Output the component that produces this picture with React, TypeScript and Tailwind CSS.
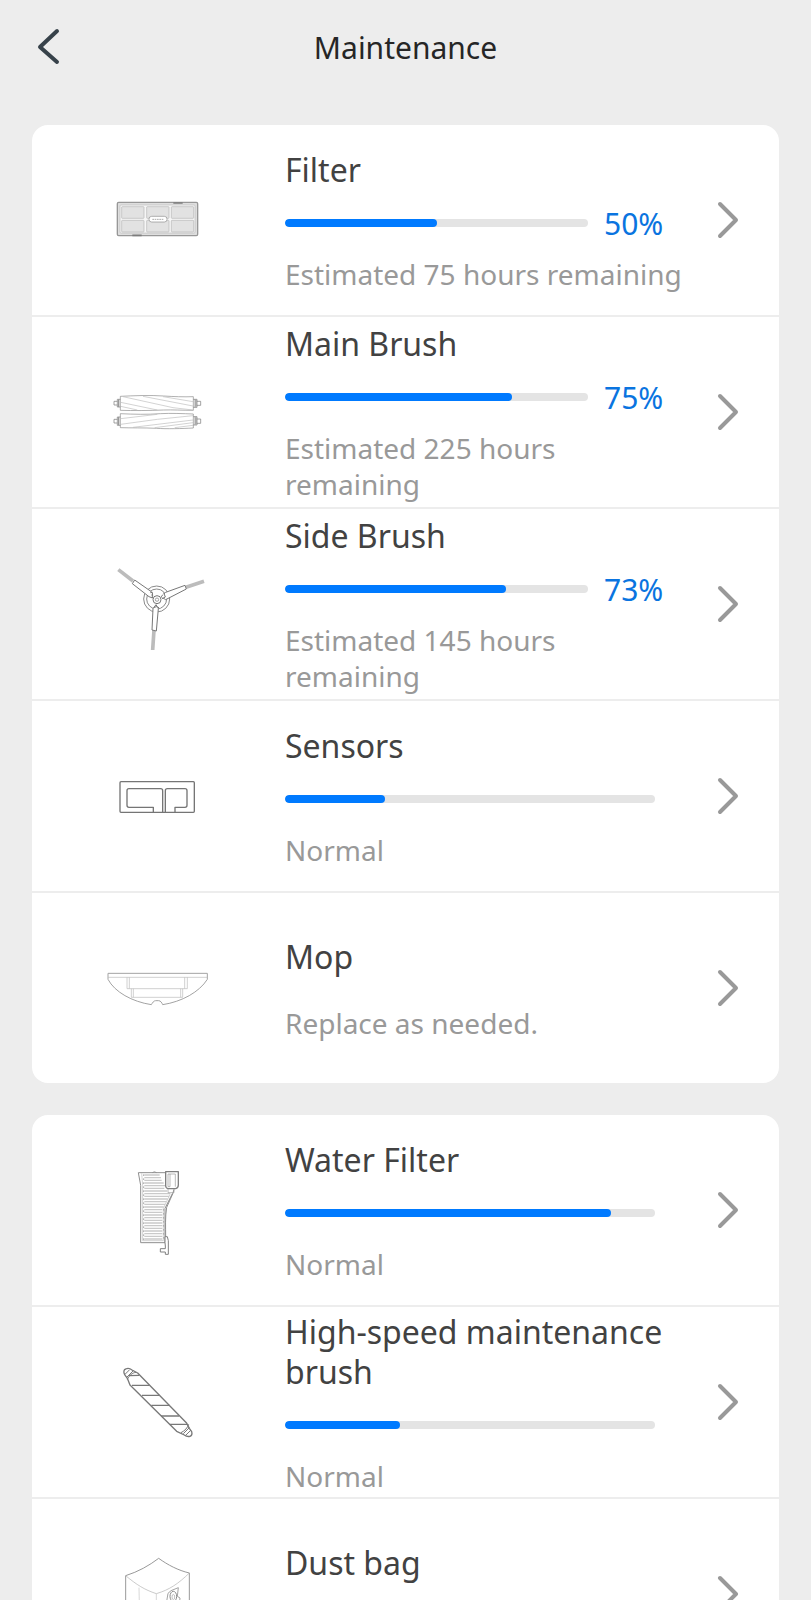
import type { ReactNode } from "react";

interface Part {
  name: string;
  status?: string;
  level?: number;
  showPercent?: boolean;
  icon: ReactNode;
}

function Drawing({ viewBox, children }: { viewBox: string; children: ReactNode }) {
  return (
    <svg
      className="h-[120px] w-[120px]"
      viewBox={viewBox}
      fill="none"
      stroke="#8a8a8a"
      strokeWidth={3}
      strokeLinejoin="round"
      aria-hidden="true"
    >
      {children}
    </svg>
  );
}

function FilterIcon() {
  return (
    <Drawing viewBox="-5 -60 360 360">
      <rect x="53" y="67" width="241" height="100" rx="4" fill="#dedede" stroke="#979797" strokeWidth={4} />
      <rect x="61" y="75" width="225" height="84" rx="3" fill="#f6f6f6" stroke="#bdbdbd" strokeWidth={2} />
      {[66, 141, 215].map((x) => (
        <g key={x} fill="#e2e2e2" stroke="#b6b6b6" strokeWidth={2}>
          <rect x={x} y="80" width="67" height="35" rx="2" />
          <rect x={x} y="121" width="67" height="35" rx="2" />
        </g>
      ))}
      <rect x="148" y="109" width="54" height="17" rx="8" fill="#fff" stroke="#8c8c8c" strokeWidth={2} />
      <path d="M158 118h34" stroke="#aaa" strokeWidth={3} strokeDasharray="5 2" />
      <path d="M221 69h28M98 166h28" stroke="#7d7d7d" strokeWidth={5} />
    </Drawing>
  );
}

function MainBrushIcon() {
  return (
    <Drawing viewBox="-5 -84 360 360">
      <g strokeWidth={2}>
        <path d="M62 49c40-2 90-4 130-1 30 2 60 3 89 2v41c-35 0-60-2-90-1-45 2-90 2-129 1z" />
        <path d="M62 101c40 2 80 3 120 0 30-2 70 0 99 1v42c-35 2-80 3-110 1-40-2-75-1-109-2z" />
        <path
          d="M63 67l110 23M70 50l150 33 60 7M130 49l150 29M190 50l90 15M63 79l50 11M63 116l110-13M63 133l110-15 107-11M100 142l180-22M165 143l115-15M225 143l55-7"
          stroke="#bcbcbc"
        />
        <path
          d="M62 58h-9v23h9M53 64H43v11h10M281 58h11v24h-11M292 64h11v12h-11M286 58v24M62 111h-9v25h9M53 118H43v11h10M281 110h11v25h-11M292 117h11v13h-11M286 110v25"
          stroke="#777"
        />
        <path d="M57 58v23M57 111v25M289 60v20M289 112v21" stroke="#999" strokeWidth={4} />
      </g>
    </Drawing>
  );
}

function SideBrushIcon() {
  return (
    <Drawing viewBox="-5 -33 360 360">
      <g strokeWidth={3} stroke="#8a8a8a">
        <circle cx="171" cy="132" r="39" />
        <circle cx="171" cy="132" r="30" />
      </g>
      <g stroke="#bcbcbc" strokeWidth={11}>
        <path d="M56 44l44 34M313 79l-54 18M159 285l4-60" />
      </g>
      <g fill="#fff" stroke="#777" strokeWidth={3}>
        <path d="M105 75l50 35 4 19-11-4-50-39z" />
        <path d="M256 91l-58 21-14 13 14 9 62-32z" />
        <path d="M157 225l3-64 9-12 7 12-6 67z" />
        <path d="M152 113l6-1 1 11M192 113l5 13-10 5M162 158l8-3 8 3" />
        <circle cx="172" cy="134" r="12" />
        <circle cx="172" cy="134" r="5" strokeWidth={2} />
      </g>
    </Drawing>
  );
}

function SensorsIcon() {
  return (
    <Drawing viewBox="-5 -87 360 360">
      <g stroke="#757575" strokeWidth={4}>
        <rect x="61" y="50" width="223" height="92" rx="3" />
        <path d="M161 141v-14H88q-6 0-6-6V77q0-6 6-6h95q6 0 6 6v64" />
        <path d="M197 141V77q0-6 6-6h53q6 0 6 6v44q0 6-6 6h-30v14" />
      </g>
    </Drawing>
  );
}

function MopIcon() {
  return (
    <Drawing viewBox="10 -81 360 360">
      <path
        d="M40 55h298v18c-24 38-76 67-134 76-2-5-6-12-12-12h-9c-6 0-10 7-13 12-58-9-110-38-130-76z"
        strokeWidth={3}
        stroke="#a3a3a3"
      />
      <g stroke="#bababa" strokeWidth={2}>
        <path d="M40 67h298M97 67v34h181V67M104 67v34M270 67v34M110 101v26h154v-26M116 101v26M258 101v26" />
      </g>
    </Drawing>
  );
}

function WaterFilterIcon() {
  return (
    <Drawing viewBox="-65 -15 360 360">
      <path d="M138 53H56l7 38v172h73V160l22-44" stroke="#8f8f8f" />
      <path d="M66 55l3 36v166h62V160l20-42" stroke="#bbb" strokeWidth={2} />
      <path d="M98 53l6-3 7 3" strokeWidth={2} />
      <path
        d="M74 60h46M74 68h50M74 76h52M74 84h58M74 92h62M74 100h60M74 108h68M74 116h78M74 124h74M74 132h70M74 140h66M74 148h62M74 156h58M74 164h54M74 172h54M74 180h54M74 188h54M74 196h54M74 204h54M74 212h54M74 220h54M74 228h54M74 236h54M74 244h54M74 252h54"
        stroke="#cacaca"
        strokeWidth={4}
      />
      <path d="M72 58v198M132 162v92" stroke="#aaa" strokeWidth={3} strokeDasharray="5 7" />
      <path d="M138 50h38v40c0 6-4 10-8 11h-22c-5 0-8-5-8-9z" fill="#fff" stroke="#808080" strokeWidth={4} />
      <path d="M145 57h6v38h-6zM151 57h16v38M145 101v12h18v-10" stroke="#999" strokeWidth={2} />
      <path d="M163 103l-4 14-18 40c-5 30-3 60-3 87" stroke="#8f8f8f" />
      <path d="M136 245h7l3 12v41h-9v-7h-15v-10h15v-8l-1-10z" fill="#fff" stroke="#808080" />
    </Drawing>
  );
}

function MaintenanceBrushIcon() {
  return (
    <Drawing viewBox="-35 -39 360 360">
      <g stroke="#787878" strokeWidth={4}>
        <path d="M45 59c-4-7-3-15 3-17 6-3 14-1 19 3l17 9 146 149 9 17 7 10c2 7 0 12-5 14-5 1-12 0-17-4l-23-11L61 90l-8-20z" />
        <path
          d="M45 59l15-15M51 67l20-20M53 73c6-12 15-20 26-21M221 236l18-18M228 241l16-16M214 233c12-6 20-15 23-25"
          strokeWidth={3}
        />
        <path d="M58 62l31-1M67 91h53M97 121h53M125 151h55M154 183h54M180 208h53" />
      </g>
    </Drawing>
  );
}

function DustBagIcon() {
  return (
    <Drawing viewBox="-35 -18 360 360">
      <path d="M48 107c38-12 70-30 99-52 28 20 58 36 92 44v180l-99 40-92-40z" stroke="#999" />
      <path d="M48 107c34 28 56 42 92 54 40-12 66-30 99-62" stroke="#b0b0b0" strokeWidth={2} />
      <path d="M140 161v158M88 143l3 150" stroke="#c4c4c4" strokeWidth={2} />
      <path d="M171 184l4-24 9-8 22-9-3 26 8 5-3 30-30 14z" stroke="#a3a3a3" strokeWidth={3} />
      <ellipse cx="191" cy="169" rx="10" ry="15" stroke="#8a8a8a" strokeWidth={3} />
      <ellipse cx="191" cy="171" rx="4" ry="8" stroke="#a3a3a3" strokeWidth={2} />
    </Drawing>
  );
}

const robotParts: Part[] = [
  { name: "Filter", status: "Estimated 75 hours remaining", level: 50, showPercent: true, icon: <FilterIcon /> },
  { name: "Main Brush", status: "Estimated 225 hours remaining", level: 75, showPercent: true, icon: <MainBrushIcon /> },
  { name: "Side Brush", status: "Estimated 145 hours remaining", level: 73, showPercent: true, icon: <SideBrushIcon /> },
  { name: "Sensors", status: "Normal", level: 27, icon: <SensorsIcon /> },
  { name: "Mop", status: "Replace as needed.", icon: <MopIcon /> },
];

const stationParts: Part[] = [
  { name: "Water Filter", status: "Normal", level: 88, icon: <WaterFilterIcon /> },
  { name: "High-speed maintenance brush", status: "Normal", level: 31, icon: <MaintenanceBrushIcon /> },
  { name: "Dust bag", icon: <DustBagIcon /> },
];

function LevelBar({ level, showPercent }: { level: number; showPercent?: boolean }) {
  return (
    <span className="flex h-[66px] items-center gap-4">
      <span
        role="progressbar"
        aria-valuenow={level}
        aria-valuemin={0}
        aria-valuemax={100}
        className={`h-2 shrink-0 overflow-hidden rounded-full bg-[#e4e4e4] ${showPercent ? "w-3/4" : "w-11/12"}`}
      >
        <span className="block h-full rounded-full bg-[#007aff]" style={{ width: `${level}%` }} />
      </span>
      {showPercent && <span className="pt-0.5 text-[30px] leading-9 text-[#0a74e0]">{level}%</span>}
    </span>
  );
}

function PartRow({ part }: { part: Part }) {
  return (
    <li className="border-b-2 border-[#ededed] last:border-b-0">
      <button type="button" className="flex min-h-[190px] w-full items-center text-left">
        <span className="flex w-[253px] shrink-0 justify-center pr-0.5">{part.icon}</span>
        <span className="flex min-w-0 flex-1 flex-col pt-0.5">
          <span className="text-[32px] leading-10 text-[#424242]">{part.name}</span>
          {part.level !== undefined ? (
            <LevelBar level={part.level} showPercent={part.showPercent} />
          ) : (
            <span className="h-7" />
          )}
          <span className="min-h-9 text-[28px] leading-9 text-[#999999]">{part.status}</span>
        </span>
        <svg
          className="mr-10 ml-7 h-10 w-[22px] shrink-0"
          viewBox="0 0 22 40"
          fill="none"
          stroke="#999999"
          strokeWidth={4}
          strokeLinecap="round"
          strokeLinejoin="round"
          aria-hidden="true"
        >
          <path d="M3 4l16 16L3 36" />
        </svg>
      </button>
    </li>
  );
}

function PartList({ parts }: { parts: Part[] }) {
  return (
    <ul className="shrink-0 overflow-hidden rounded-2xl bg-white">
      {parts.map((part) => (
        <PartRow key={part.name} part={part} />
      ))}
    </ul>
  );
}

export default function App() {
  return (
    <div className="flex h-screen flex-col overflow-hidden bg-[#ededed] font-['Noto_Sans','Open_Sans',sans-serif]">
      <header className="mb-[29px] grid h-24 shrink-0 grid-cols-[80px_1fr_80px] items-center">
        <button type="button" aria-label="Back" className="flex h-full items-center justify-center pl-4">
          <svg
            className="h-10 w-6"
            viewBox="0 0 24 40"
            fill="none"
            stroke="#37424a"
            strokeWidth={4}
            strokeLinecap="round"
            strokeLinejoin="round"
            aria-hidden="true"
          >
            <path d="M21 3L4 19l17 15" />
          </svg>
        </button>
        <h1 className="text-center text-[30px] leading-10 text-[#262626]">Maintenance</h1>
      </header>
      <main className="flex min-h-0 flex-1 flex-col gap-8 overflow-y-auto px-8 pb-8 [scrollbar-width:none]">
        <PartList parts={robotParts} />
        <PartList parts={stationParts} />
      </main>
    </div>
  );
}
